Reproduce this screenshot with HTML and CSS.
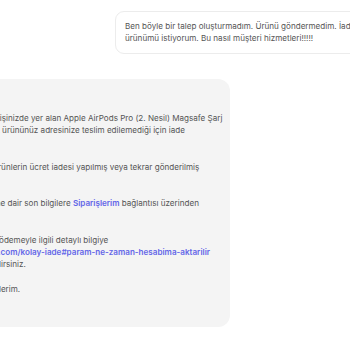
FILE: index.html
```html
<!DOCTYPE html>
<html>
	<head>
		<meta charset="UTF-8">
		<title>Destek</title>
		<link rel="stylesheet" href="styles.css">
	</head>
	<body>
		<div class="chat">
			<div class="msg msg-user">
				Ben böyle bir talep oluşturmadım. Ürünü göndermedim. İade edilen<br>
				ürünümü istiyorum. Bu nasıl müşteri hizmetleri!!!!!
			</div>
			<div class="msg msg-bot">
				<p>Merhaba,</p>
				<p>Hesabınızdaki siparişinizde yer alan Apple AirPods Pro (2. Nesil) Magsafe Şarj<br>
				Kutusu MTJV3TU/A ürününüz adresinize teslim edilemediği için iade<br>
				edilmiştir.</p>
				<p>Teslim edilmeyen ürünlerin ücret iadesi yapılmış veya tekrar gönderilmiş<br>
				olabilir.</p>
				<p>Siparişinizin iadesine dair son bilgilere <a href="#">Siparişlerim</a> bağlantısı üzerinden<br>
				ulaşabilirsiniz.</p>
				<p>Size yapılacak geri ödemeyle ilgili detaylı bilgiye<br>
				<a href="#">http://hepsiburada.com/kolay-iade#param-ne-zaman-hesabima-aktarilir</a><br>
				bağlantıdan ulaşabilirsiniz.</p>
				<p>Mutlu alışverişler dilerim.</p>
			</div>
		</div>
	</body>
</html>
```

FILE: styles.css
```css
body, html {
	margin: 0;
	padding: 0;
	background: #fff;
	overflow: hidden;
	height: 100%;
	font-family: Inter, "Noto Sans", sans-serif;
}
.chat {
	display: flex;
	flex-direction: column;
	gap: 25px;
	padding-top: 11px;
}
.msg {
	font-size: 8.1px;
	line-height: 12.2px;
	color: #555;
	white-space: nowrap;
	box-sizing: border-box;
}
.msg-user {
	margin-left: 115px;
	width: 290px;
	padding: 8px 9px 9px;
	background: #fff;
	border: 1px solid #ececec;
	border-radius: 9px;
}
.msg-bot {
	margin-left: -86px;
	width: 316px;
	padding: 8px 11px 20px;
	background: #f4f4f4;
	border-radius: 12px;
}
.msg-bot p {
	margin: 0 0 12.2px;
}
.msg-bot a {
	color: #6366e8;
	font-weight: 600;
	text-decoration: none;
}
```
